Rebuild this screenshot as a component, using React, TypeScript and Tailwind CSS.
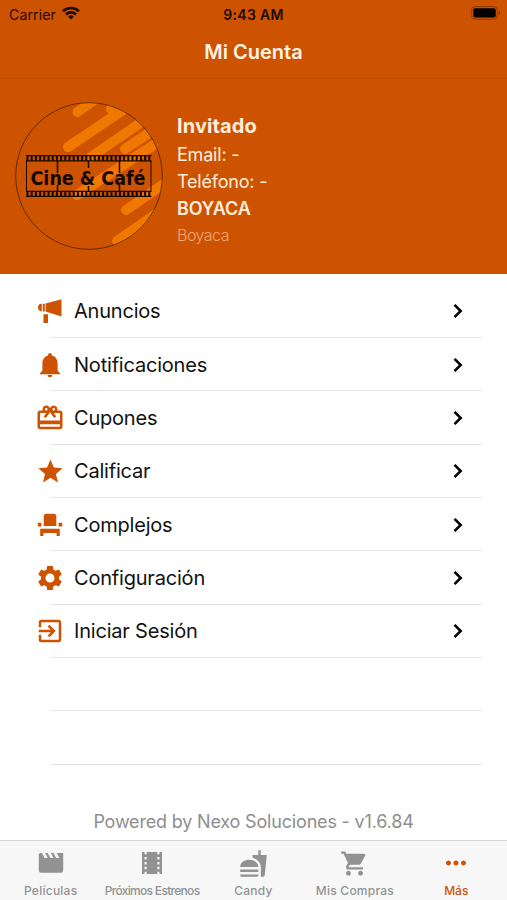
import { useState } from 'react'
import type { ReactNode } from 'react'
import {
  MdRedeem, MdGrade, MdSettings, MdExitToApp,
  MdFastfood, MdShoppingCart, MdMoreHoriz,
} from 'react-icons/md'

interface MenuItem {
  label: string
  icon: ReactNode
}

interface Tab {
  label: string
  icon: ReactNode
  text: string
}

const Megaphone = () => (
  <svg viewBox="0 0 26 26" className="size-[26px]" fill="currentColor">
    <path d="M4.800 5.800v7.600C2.300 13.400 1 11.800 1 9.600s1.300-3.800 3.800-3.800zM5.800 5.800h2v7.800h-2zM8.600 5.600 24.500 1.200v17.400L8.600 13.600zM6.500 16.300h4.500V25H6.500z" />
  </svg>
)

const Bell = () => (
  <svg viewBox="0 0 26 26" className="size-[26px]" fill="currentColor">
    <path d="M13 1c1.100 0 1.900.8 1.900 1.900v.5c3.600.9 5.700 4 5.700 7.800v6.300c0 1.700 1 2.600 2.400 3.400v1.300H3v-1.300c1.400-.8 2.400-1.700 2.400-3.400v-6.300c0-3.800 2.100-6.900 5.700-7.800v-.5C11.100 1.800 11.900 1 13 1z" />
    <path d="M10.600 23h4.800a2.400 2.200 0 0 1-4.800 0z" />
  </svg>
)

const Seat = () => (
  <svg viewBox="0 0 26 26" className="size-[26px]" fill="currentColor">
    <path d="M9.200 1.800h7.600a2.500 2.500 0 0 1 2.500 2.500v9.700H6.700V4.300a2.500 2.500 0 0 1 2.500-2.500z" />
    <path d="M.8 10.800h3.600v3.600H.8zM21.600 10.800h3.600v3.600h-3.600zM3.200 16.700h19.600V24h-3.200v-3H6.400v3H3.200z" />
  </svg>
)

const Clapper = () => (
  <svg viewBox="0 0 26 24" className="h-6 w-[26px]" fill="currentColor">
    <path d="M2.500 2H4l2.500 5h3.200L7.200 2h2.600l2.500 5h3.200L13 2h2.600l2.500 5h3.200l-2.500-5h6.400v17.500a2.200 2.200 0 0 1-2.200 2.200H3a2.200 2.200 0 0 1-2.200-2.200V4c0-1 .7-1.800 1.700-2z" />
  </svg>
)

const Film = () => (
  <svg viewBox="0 0 22 24" className="h-6 w-[22px]" fill="currentColor">
    <path
      fillRule="evenodd"
      d="M1 1h2.500v2.300h2.200V1h10.600v2.300h2.200V1H21v22h-2.500v-2.300h-2.200V23H5.700v-2.300H3.500V23H1zM3.500 6v2.500h2.200V6zM3.500 11v2.500h2.200V11zM3.500 15.800v2.500h2.200v-2.500zM16.300 6v2.500h2.200V6zM16.300 11v2.500h2.200V11zM16.300 15.800v2.500h2.200v-2.500z"
    />
  </svg>
)

const items: MenuItem[] = [
  { label: 'Anuncios', icon: <Megaphone /> },
  { label: 'Notificaciones', icon: <Bell /> },
  { label: 'Cupones', icon: <MdRedeem size={30} /> },
  { label: 'Calificar', icon: <MdGrade size={29} /> },
  { label: 'Complejos', icon: <Seat /> },
  { label: 'Configuración', icon: <MdSettings size={30} /> },
  { label: 'Iniciar Sesión', icon: <MdExitToApp size={30} /> },
]

const tabs: Tab[] = [
  { label: 'Películas', icon: <Clapper />, text: 'tracking-[0.25px]' },
  { label: 'Próximos Estrenos', icon: <Film />, text: 'tracking-[-0.7px]' },
  { label: 'Candy', icon: <MdFastfood size={29} />, text: 'tracking-[0.2px]' },
  { label: 'Mis Compras', icon: <MdShoppingCart size={29} />, text: 'tracking-[0.25px]' },
  { label: 'Más', icon: <MdMoreHoriz size={30} />, text: 'tracking-[0px]' },
]

const StatusBar = () => (
  <div className="grid h-7 grid-cols-3 items-center pl-[9px] pr-[6px] text-[14px] text-[#1c0a00]">
    <div className="flex items-center gap-1.5">
      <span className="tracking-[0.15px]">Carrier</span>
      <svg viewBox="0 0 18 14" className="-mt-0.5 h-[14px] w-[18px]" fill="none" stroke="currentColor" strokeWidth="2.600">
        <path d="M1 5.200a11.500 11.500 0 0 1 16 0M4 8.500a7 7 0 0 1 10 0" />
        <path d="M9 13.500 6.200 10.700a4 4 0 0 1 5.600 0z" fill="currentColor" stroke="none" />
      </svg>
    </div>
    <span className="-ml-[3px] text-center font-semibold tracking-[0.3px]">9:43 AM</span>
    <svg viewBox="0 0 30 14" className="-mt-0.5 h-[14px] w-[30px] justify-self-end">
      <rect x=".6" y=".6" width="25.800" height="12.600" rx="3.500" fill="none" stroke="#8a3800" />
      <rect x="2.300" y="2.300" width="22.400" height="9.200" rx="2" fill="#000" />
      <path d="M27.700 4.800c1.900.6 1.900 3.800 0 4.400z" fill="#8a3800" />
    </svg>
  </div>
)

const Logo = () => (
  <svg viewBox="0 0 150 150" className="size-[150px] shrink-0">
    <defs>
      <clipPath id="disc"><circle cx="75" cy="75" r="74" /></clipPath>
    </defs>
    <g clipPath="url(#disc)" fill="none" stroke="#f07800" strokeWidth="10" strokeLinecap="round">
      <path d="M63.500 11 90-8M54 46 109 9M97 8 104 3M77 56 129 20M63 94 155 34M111 48 160 15" />
      <path d="M112 109 160 76M103 140 155 104" />
    </g>
    <circle cx="75" cy="75" r="73.300" fill="none" stroke="#5a2400" strokeWidth=".9" />
    <g stroke="#160800" fill="none">
      <path d="M12 54.600h125.500M12 59.800h125.500M12 90.400h125.500M12 95.400h125.500" strokeWidth="1.300" />
      <path d="M12.500 57.200h125M12.500 93h125" strokeWidth="5" strokeDasharray="2 2.200" />
      <path d="M12.500 60v30M137 60v30" strokeWidth="1" />
      <path d="M43.500 60v12M43.500 84v7M74.500 60v7M74.500 85v6M105.500 60v12M105.500 84v7" strokeWidth="1.500" />
    </g>
    <text
      x="16.500" y="83.500" textLength="115" lengthAdjust="spacingAndGlyphs"
      className="font-['DejaVu_Sans',sans-serif] text-[19px] font-bold" fill="#160800"
    >
      Cine &amp; Café
    </text>
  </svg>
)

const Chevron = () => (
  <svg viewBox="0 0 10 16" className="h-4 w-[10px]" fill="none" stroke="#000" strokeWidth="2.600">
    <path d="m1.500 1.800 6.200 6.200-6.200 6.200" />
  </svg>
)

export default function App() {
  const [active, setActive] = useState('Más')

  return (
    <div className="flex h-[900px] w-full flex-col overflow-hidden bg-white font-['Inter',sans-serif]">
      <header className="h-[79px] shrink-0 border-b border-[#c04d00] bg-[#cd5300]">
        <StatusBar />
        <h1 className="pt-2.5 text-center text-[20px] font-semibold leading-7 text-[#fff3e6]">Mi Cuenta</h1>
      </header>

      {/* Profile */}
      <section className="flex h-[195px] shrink-0 bg-[#cd5300] pl-[14px] pt-[22px]">
        <Logo />
        <div className="ml-[13px] pt-[11px] text-[18px] leading-[26.500px] text-[#ffeedd]">
          <p className="text-[20px] font-bold leading-7 tracking-[0.1px]">Invitado</p>
          <p className="pt-0.5 tracking-[-0.2px]">Email: -</p>
          <p className="tracking-[-0.2px]">Teléfono: -</p>
          <p className="pt-px font-semibold tracking-[-0.2px]">BOYACA</p>
          <p className="text-[16px] font-light leading-6 tracking-[-0.5px] text-[#eba67a]">Boyaca</p>
        </div>
      </section>

      {/* Menu */}
      <main className="flex-1 pl-[50px] pr-[25px] pt-[10.500px]">
        {items.map((item) => (
          <button key={item.label} className="flex h-[53.350px] w-full items-center border-b border-[#e5e5e5] pt-px text-left">
            <span className="-ml-[15px] flex w-[30px] shrink-0 justify-center text-[#cd5300]">{item.icon}</span>
            <span className="ml-[9px] flex-1 text-[20px] tracking-[-0.2px] text-[#111]">{item.label}</span>
            <span className="mr-[19px]"><Chevron /></span>
          </button>
        ))}
        <div className="h-[53.350px] border-b border-[#e5e5e5]" />
        <div className="h-[53.350px] border-b border-[#e5e5e5]" />
      </main>

      <p className="h-[30px] shrink-0 text-center text-[18px] leading-6 tracking-[-0.18px] text-[#8e8e8e]">
        Powered by Nexo Soluciones - v1.6.84
      </p>

      <nav className="grid h-[60px] shrink-0 grid-cols-5 border-t border-[#d5d5d5] bg-[#f7f7f7]">
        {tabs.map((tab) => (
          <button
            key={tab.label}
            onClick={() => setActive(tab.label)}
            className={`flex flex-col items-center pt-1.5 ${active === tab.label ? 'text-[#cd5300]' : 'text-[#929292]'}`}
          >
            <span className="flex h-8 items-center">{tab.icon}</span>
            <span className={`mt-px whitespace-nowrap text-[12px] font-medium leading-[22px] ${tab.text}`}>{tab.label}</span>
          </button>
        ))}
      </nav>
    </div>
  )
}
